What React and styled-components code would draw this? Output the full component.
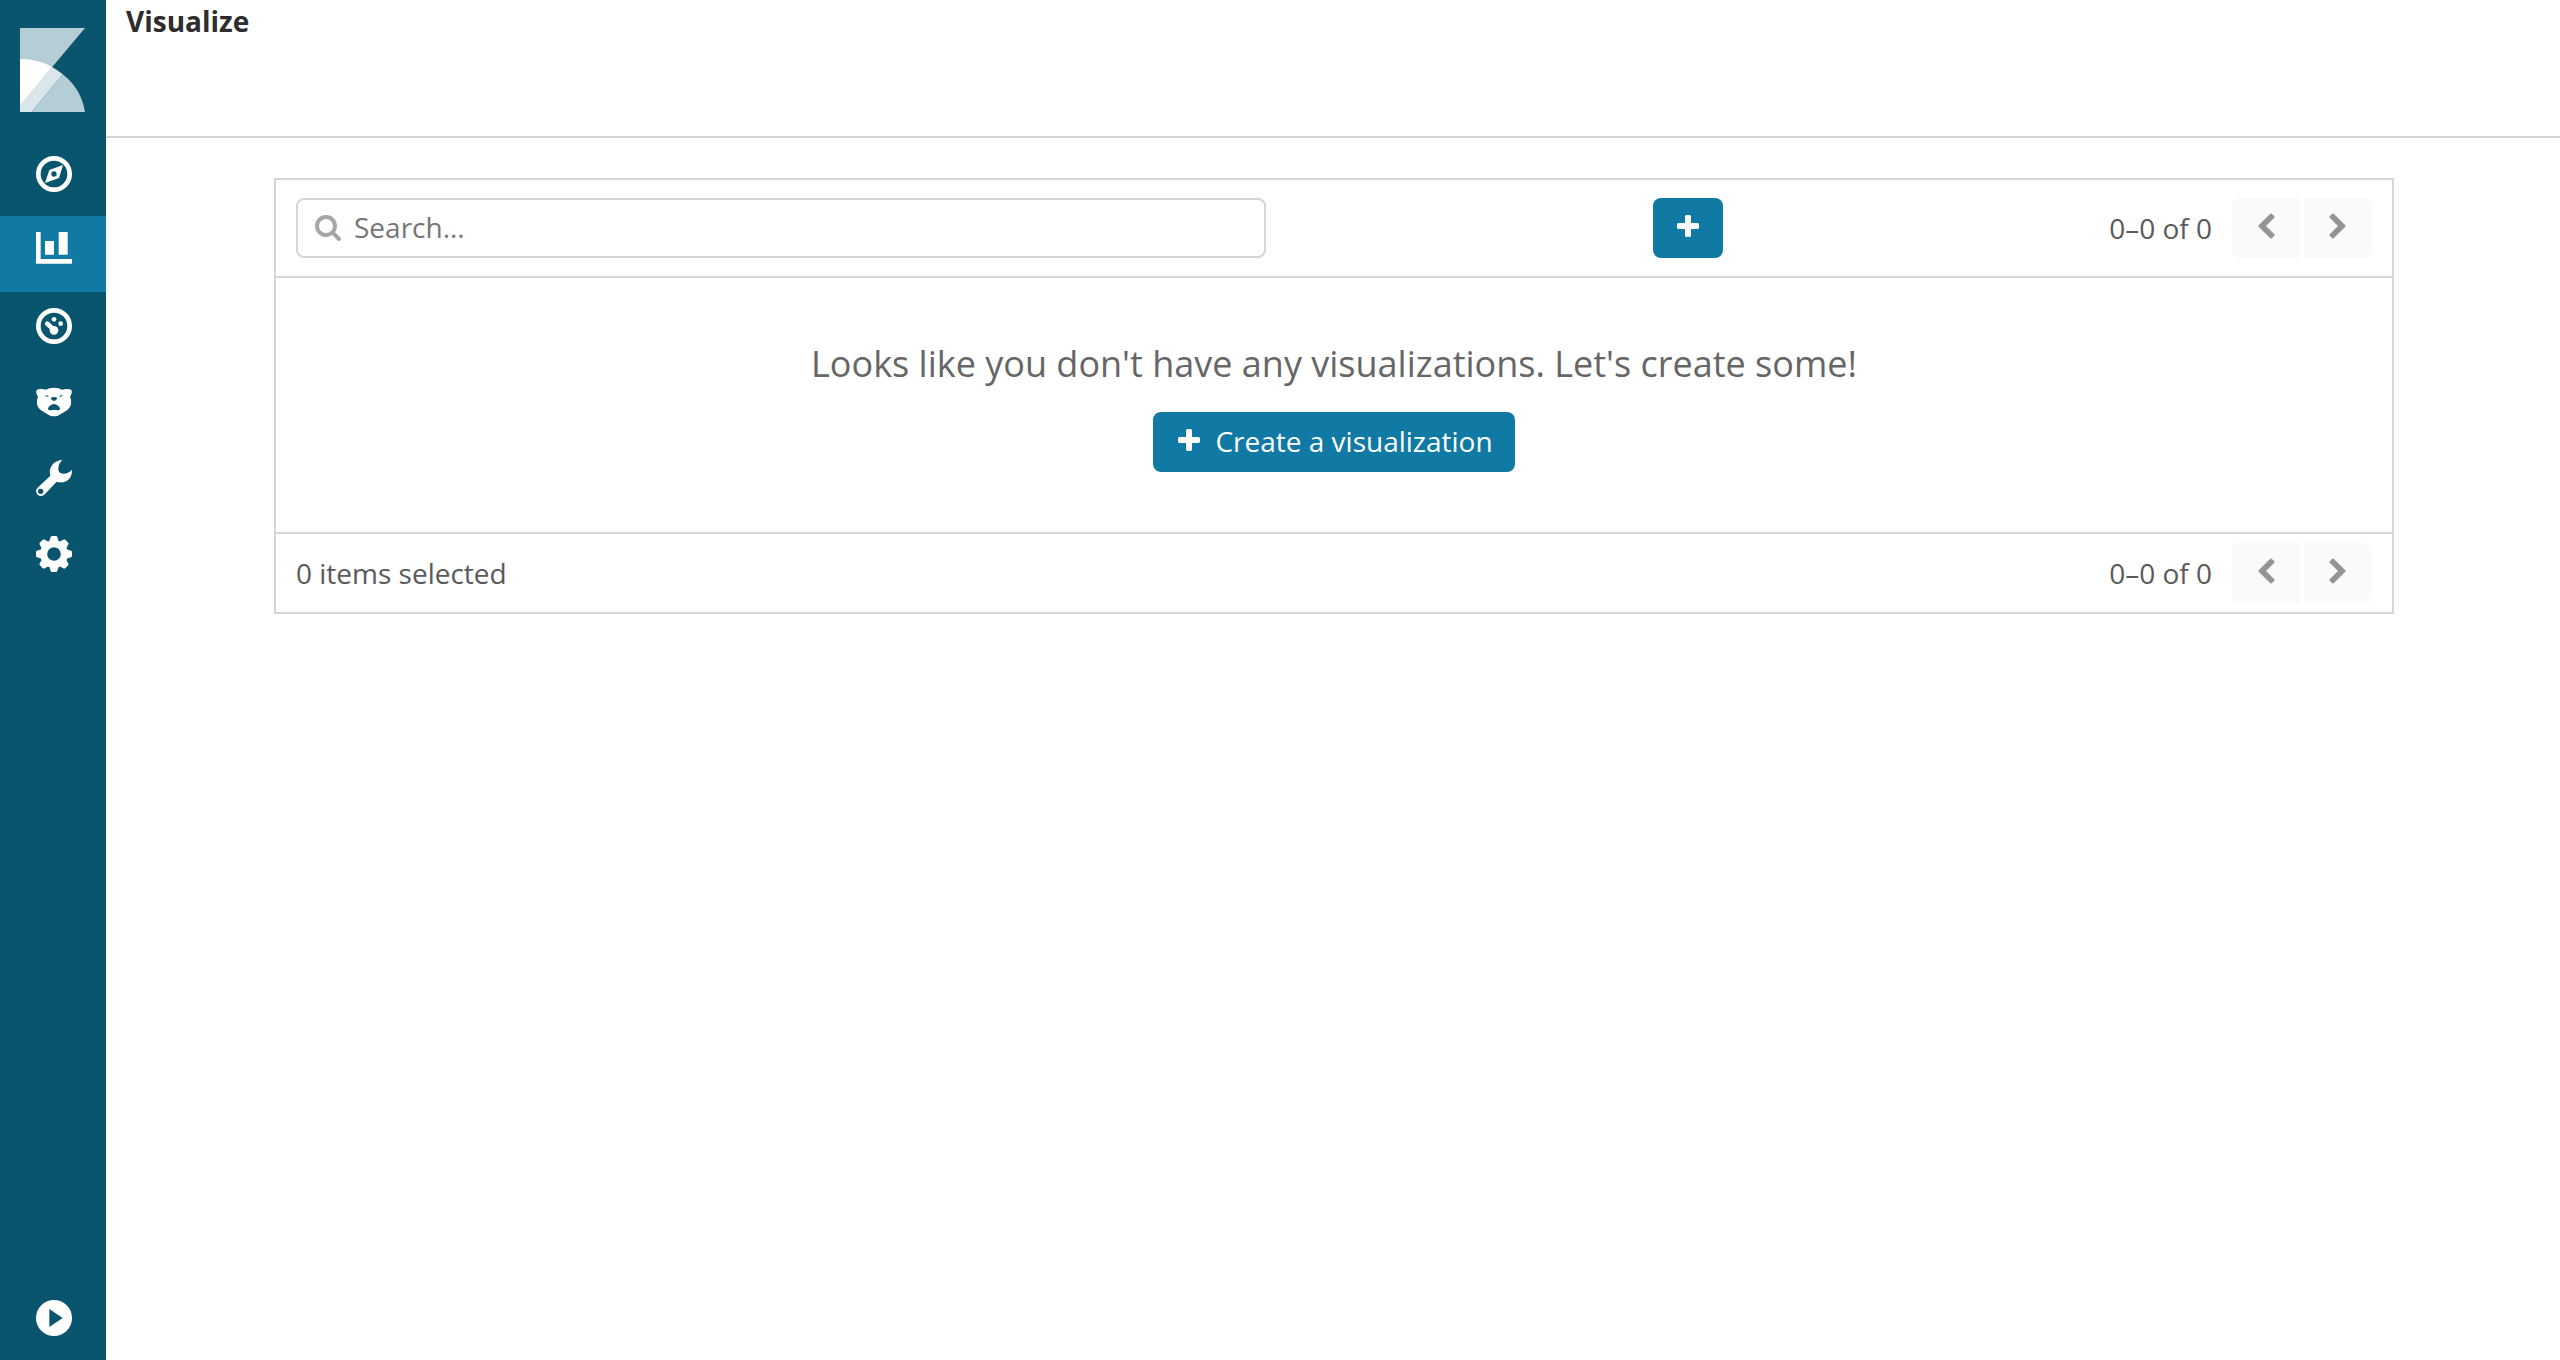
import React from "react";
import styled, { createGlobalStyle } from "styled-components";

const color = {
  sidebar: "#09556e",
  accent: "#1079a4",
  border: "#d6d6d6",
  title: "#2d2d2d",
  text: "#5a5a5a",
  muted: "#666666",
};

const GlobalStyle = createGlobalStyle`
  *, *::before, *::after { box-sizing: border-box; }
  body {
    margin: 0;
    background: #fff;
    color: ${color.text};
    font: 28px/40px "Open Sans", "Noto Sans", sans-serif;
  }
  button, input { font: inherit; }
`;

const Shell = styled.div`
  display: flex;
  min-height: 100vh;
`;

const Sidebar = styled.nav`
  display: flex;
  flex-direction: column;
  flex: none;
  width: 106px;
  background: ${color.sidebar};
`;

const LogoLink = styled.a`
  display: block;
  height: 140px;
  padding: 28px 20px;
`;

const Logo = styled.svg`
  display: block;
  width: 65px;
  height: 84px;
`;

const NavList = styled.ul`
  margin: 0;
  padding: 0;
  list-style: none;
  &:last-child { margin-top: auto; }
`;

const NavLink = styled.a`
  display: block;
  height: 76px;
  padding: 16px 34px 24px 36px;
  color: #fff;
  background: ${(p) => (p.$active ? color.accent : "transparent")};
`;

const NavIcon = styled.svg`
  display: block;
  width: 36px;
  height: 36px;
  fill: currentColor;
`;

const Main = styled.main`
  flex: 1;
  min-width: 0;
`;

const TopBar = styled.header`
  height: 138px;
  padding: 0 20px;
  border-bottom: 2px solid ${color.border};
`;

const Title = styled.h1`
  margin: 0;
  color: ${color.title};
  font-size: 28px;
  font-weight: 700;
  line-height: 42px;
`;

const Content = styled.div`
  padding: 40px 20px 40px 22px;
`;

const Panel = styled.section`
  max-width: 2120px;
  margin: 0 auto;
  border: 2px solid ${color.border};
`;

const Bar = styled.div`
  display: flex;
  align-items: center;
  justify-content: space-between;
  padding: ${(p) => (p.$compact ? "9px 20px" : "18px 20px")};
`;

const SearchBox = styled.label`
  display: flex;
  align-items: center;
  gap: 12px;
  flex: 0 1 970px;
  height: 60px;
  padding: 0 16px 2px;
  border: 2px solid ${color.border};
  border-radius: 8px;
  color: #a6a6a6;
`;

const SearchInput = styled.input`
  flex: 1;
  min-width: 0;
  padding: 0;
  border: 0;
  outline: 0;
  background: transparent;
  color: ${color.text};
  &::placeholder { color: #757575; opacity: 1; }
`;

const Glyph = styled.svg`
  display: block;
  flex: none;
  width: 28px;
  height: 28px;
  fill: currentColor;
`;

const PrimaryButton = styled.button`
  display: inline-flex;
  align-items: center;
  justify-content: center;
  gap: 12px;
  height: 60px;
  padding: 0 ${(p) => (p.$iconOnly ? 21 : 22)}px 2px;
  border: 0;
  border-radius: 8px;
  background: ${color.accent};
  color: #fff;
`;

const Pager = styled.div`
  display: flex;
  align-items: center;
  gap: 20px;
`;

const PagerButtons = styled.div`
  display: flex;
  gap: 4px;
`;

const PagerButton = styled.button`
  display: flex;
  align-items: center;
  justify-content: center;
  width: 68px;
  height: 60px;
  padding: 0 0 2px;
  border: 0;
  border-radius: ${(p) => (p.$end ? "0 8px 8px 0" : "8px 0 0 8px")};
  background: #fafafa;
  color: #949494;
`;

const EmptyState = styled.div`
  display: flex;
  flex-direction: column;
  align-items: center;
  gap: 22px;
  padding: 60px 20px;
  border: solid ${color.border};
  border-width: 2px 0;
`;

const EmptyText = styled.p`
  margin: 0;
  color: ${color.muted};
  font-size: 36px;
  line-height: 52px;
`;

const glyphs = {
  plus: "M1600 736v192q0 40-28 68t-68 28h-416v416q0 40-28 68t-68 28h-192q-40 0-68-28t-28-68v-416h-416q-40 0-68-28t-28-68v-192q0-40 28-68t68-28h416v-416q0-40 28-68t68-28h192q40 0 68 28t28 68v416h416q40 0 68 28t28 68z",
  search:
    "M1216 832q0-185-131.500-316.500t-316.500-131.500-316.500 131.500-131.500 316.500 131.500 316.500 316.500 131.500 316.500-131.500 131.500-316.500zm512 832q0 52-38 90t-90 38q-54 0-90-38l-343-342q-179 124-399 124-143 0-273.500-55.500t-225-150-150-225-55.500-273.500 55.500-273.500 150-225 225-150 273.500-55.500 273.500 55.500 225 150 150 225 55.500 273.500q0 220-124 399l343 343q37 37 37 90z",
  left: "M1427 301l-531 531 531 531q19 19 19 45t-19 45l-166 166q-19 19-45 19t-45-19l-742-742q-19-19-19-45t19-45l742-742q19-19 45-19t45 19l166 166q19 19 19 45t-19 45z",
  right:
    "M1363 877l-742 742q-19 19-45 19t-45-19l-166-166q-19-19-19-45t19-45l531-531-531-531q-19-19-19-45t19-45l166-166q19-19 45-19t45 19l742 742q19 19 19 45t-19 45z",
};

function Icon({ name }) {
  return (
    <Glyph viewBox="0 0 1792 1792" aria-hidden="true">
      <path d={glyphs[name]} />
    </Glyph>
  );
}

const ring = <circle cx="54" cy="54" r="47" fill="none" stroke="currentColor" strokeWidth="14" />;

const navItems = [
  {
    label: "Discover",
    art: (
      <>
        {ring}
        <path fillRule="evenodd" d="M81 27L69 66L27 81L40 42ZM54 46a8 8 0 1 0 0 16a8 8 0 1 0 0-16Z" />
      </>
    ),
  },
  {
    label: "Visualize",
    active: true,
    art: <path d="M0 0H14V81H108V95H0ZM27 27H54V68H27ZM68 0H95V68H68Z" />,
  },
  {
    label: "Dashboard",
    art: (
      <>
        {ring}
        <circle cx="54" cy="34" r="7" />
        <circle cx="74" cy="47" r="7" />
        <circle cx="54" cy="67" r="13" />
        <path d="M34 47L54 65" fill="none" stroke="currentColor" strokeWidth="14" strokeLinecap="round" />
      </>
    ),
  },
  {
    label: "Timelion",
    art: (
      <path
        fillRule="evenodd"
        d="M54 11C44 11 36 13 30 17C22 14 8 14 3 17C-1 20 0 30 6 38C3 45 2 52 3 60C5 71 12 77 22 83C33 89 41 97 54 97C67 97 75 89 86 83C96 77 103 71 105 60C106 52 105 45 102 38C108 30 109 20 105 17C100 14 86 14 78 17C72 13 64 11 54 11ZM28 33L39 36Q33 40 29 36ZM80 33L69 36Q75 40 79 36ZM44 41Q54 37 64 41Q63 48 54 51Q45 48 44 41ZM54 60C62 61 70 66 72 73Q72 80 65 79Q60 77 54 77Q48 77 43 79Q36 80 36 73C38 66 46 61 54 60Z"
      />
    ),
  },
  {
    label: "Dev Tools",
    art: (
      <path
        fillRule="evenodd"
        d="M79 0C71 8 67 16 67 27Q67 41 82 41Q97 41 108 29C109 50 96 67 77 67Q68 68 62 65L25 104Q14 112 5 104Q-4 94 4 84L43 47C36 25 52 1 79 0ZM14 86a8 8 0 1 0 0 16a8 8 0 1 0 0-16Z"
      />
    ),
  },
  {
    label: "Management",
    art: (
      <>
        <circle cx="54" cy="54" r="31" fill="none" stroke="currentColor" strokeWidth="21" />
        {[0, 45, 90, 135, 180, 225, 270, 315].map((angle) => (
          <path key={angle} transform={`rotate(${angle} 54 54)`} d="M39 19L44 3Q45 0 48 0H60Q63 0 64 3L69 19Z" />
        ))}
      </>
    ),
  },
];

function NavItem({ label, active, children }) {
  return (
    <li>
      <NavLink href="#" aria-label={label} aria-current={active ? "page" : undefined} $active={active}>
        <NavIcon viewBox="0 0 108 108" aria-hidden="true">
          {children}
        </NavIcon>
      </NavLink>
    </li>
  );
}

function Pagination() {
  return (
    <Pager>
      <span>0–0 of 0</span>
      <PagerButtons>
        <PagerButton type="button" disabled aria-label="Previous page">
          <Icon name="left" />
        </PagerButton>
        <PagerButton type="button" disabled aria-label="Next page" $end>
          <Icon name="right" />
        </PagerButton>
      </PagerButtons>
    </Pager>
  );
}

export default function App() {
  return (
    <>
      <GlobalStyle />
      <Shell>
        <Sidebar>
          <LogoLink href="#" aria-label="Home">
            <Logo viewBox="0 0 195 252" aria-hidden="true">
              <path fill="#b5cdd5" d="M0 0H195L0 232Z" />
              <path fill="#b5cdd5" d="M128 139Q183 181 195 252H35Z" />
              <path fill="#dae6ea" d="M96 117Q113 126 128 139L35 252H0V230Z" />
              <path fill="#fff" d="M0 93Q53 92 96 117L0 232Z" />
            </Logo>
          </LogoLink>
          <NavList>
            {navItems.map((item) => (
              <NavItem key={item.label} label={item.label} active={item.active}>
                {item.art}
              </NavItem>
            ))}
          </NavList>
          <NavList>
            <NavItem label="Expand">
              <path fillRule="evenodd" d="M54 0a54 54 0 1 0 0 108a54 54 0 1 0 0-108ZM40 27L80 54L40 81Z" />
            </NavItem>
          </NavList>
        </Sidebar>
        <Main>
          <TopBar>
            <Title>Visualize</Title>
          </TopBar>
          <Content>
            <Panel>
              <Bar>
                <SearchBox>
                  <Icon name="search" />
                  <SearchInput type="text" placeholder="Search..." aria-label="Search" />
                </SearchBox>
                <PrimaryButton type="button" aria-label="Create new visualization" $iconOnly>
                  <Icon name="plus" />
                </PrimaryButton>
                <Pagination />
              </Bar>
              <EmptyState>
                <EmptyText>Looks like you don't have any visualizations. Let's create some!</EmptyText>
                <PrimaryButton type="button">
                  <Icon name="plus" />
                  Create a visualization
                </PrimaryButton>
              </EmptyState>
              <Bar $compact>
                <span>0 items selected</span>
                <Pagination />
              </Bar>
            </Panel>
          </Content>
        </Main>
      </Shell>
    </>
  );
}
